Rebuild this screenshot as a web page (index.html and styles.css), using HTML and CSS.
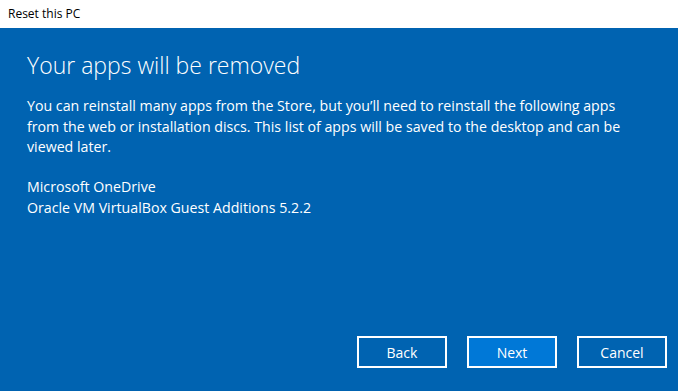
FILE: index.html
```html
<!DOCTYPE html>
<html lang="en">
<head>
    <meta charset="UTF-8">
    <meta name="viewport" content="width=device-width, initial-scale=1.0">
    <title>Reset this PC</title>
    <link rel="stylesheet" href="styles.css">
</head>
<body>
    <div class="title-bar">Reset this PC</div>

    <div class="panel">
        <h1 class="heading">Your apps will be removed</h1>
        <p class="message">You can reinstall many apps from the Store, but you’ll need to reinstall the following apps from the web or installation discs. This list of apps will be saved to the desktop and can be viewed later.</p>

        <!-- Apps that have to be reinstalled by hand -->
        <ul class="app-list">
            <li>Microsoft OneDrive</li>
            <li>Oracle VM VirtualBox Guest Additions 5.2.2</li>
        </ul>

        <div class="actions">
            <button class="action-button">Back</button>
            <button class="action-button primary">Next</button>
            <button class="action-button">Cancel</button>
        </div>
    </div>
</body>
</html>
```

FILE: styles.css
```css
/* Fill the whole window */
html, body {
    height: 100%;
    margin: 0;
    padding: 0;
}

body {
    display: flex;
    flex-direction: column;
    font-family: "Open Sans", "Noto Sans", sans-serif;
    background-color: #0063b1;
}

/* White window caption */
.title-bar {
    height: 28px;
    line-height: 28px;
    padding-left: 8px;
    background-color: #fff;
    color: #000;
    font-size: 12px;
}

/* Blue wizard page */
.panel {
    flex: 1;
    display: flex;
    flex-direction: column;
    padding: 21px 11px 23px 27px;
    color: #fff;
}

.heading {
    margin: 0;
    font-size: 23px;
    font-weight: 300;
    line-height: 32px;
}

.message {
    margin: 15px 0 0;
    padding-right: 40px;
    font-size: 14.2px;
    line-height: 20.7px;
}

.app-list {
    list-style: none;
    margin: 19px 0 0;
    padding: 0;
    font-size: 14.2px;
    line-height: 20.7px;
}

/* Buttons sit at the bottom right */
.actions {
    margin-top: auto;
    display: flex;
    justify-content: flex-end;
    gap: 20px;
}

.action-button {
    width: 90px;
    height: 32px;
    border: 2px solid #fff;
    background-color: transparent;
    color: #fff;
    font-family: inherit;
    font-size: 14px;
    cursor: pointer;
}

.action-button.primary {
    background-color: #0078d7;
}
```
